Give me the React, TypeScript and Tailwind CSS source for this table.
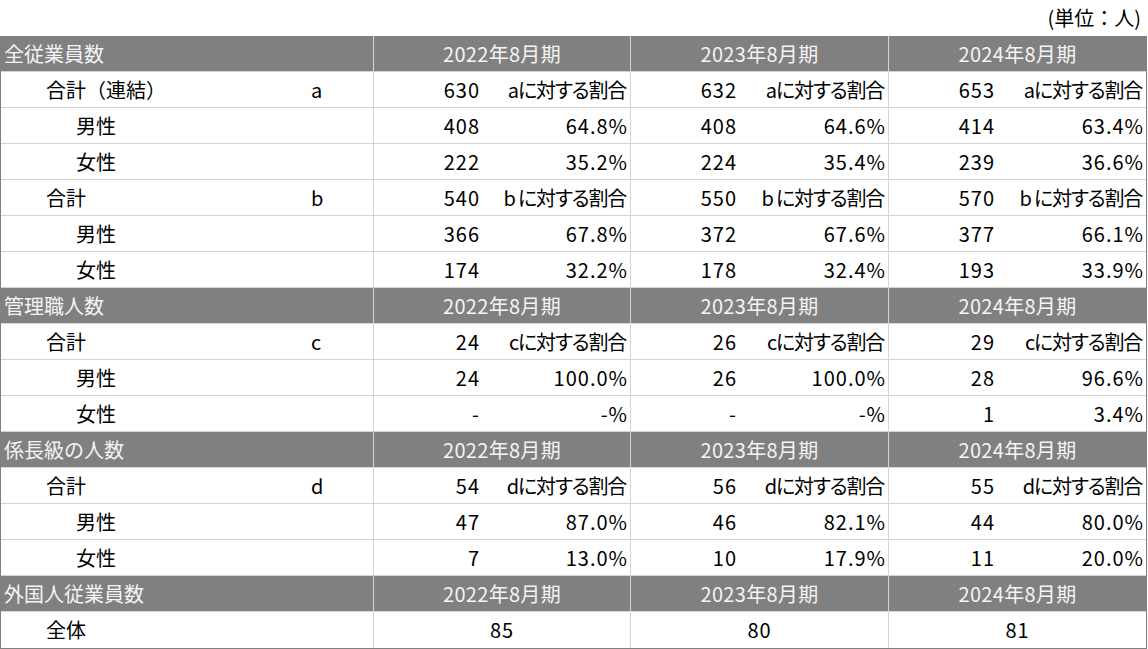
import React from "react";

type Row =
  | { kind: "head"; label: string }
  | { kind: "data"; label: string; indent: 1 | 2; letter?: string; vals: [string, string][] }
  | { kind: "single"; label: string; vals: string[] };

const years = ["2022年8月期", "2023年8月期", "2024年8月期"];

const rows: Row[] = [
  { kind: "head", label: "全従業員数" },
  { kind: "data", label: "合計（連結）", indent: 1, letter: "a", vals: [["630", "aに対する割合"], ["632", "aに対する割合"], ["653", "aに対する割合"]] },
  { kind: "data", label: "男性", indent: 2, vals: [["408", "64.8%"], ["408", "64.6%"], ["414", "63.4%"]] },
  { kind: "data", label: "女性", indent: 2, vals: [["222", "35.2%"], ["224", "35.4%"], ["239", "36.6%"]] },
  { kind: "data", label: "合計", indent: 1, letter: "b", vals: [["540", "b に対する割合"], ["550", "b に対する割合"], ["570", "b に対する割合"]] },
  { kind: "data", label: "男性", indent: 2, vals: [["366", "67.8%"], ["372", "67.6%"], ["377", "66.1%"]] },
  { kind: "data", label: "女性", indent: 2, vals: [["174", "32.2%"], ["178", "32.4%"], ["193", "33.9%"]] },
  { kind: "head", label: "管理職人数" },
  { kind: "data", label: "合計", indent: 1, letter: "c", vals: [["24", "cに対する割合"], ["26", "cに対する割合"], ["29", "cに対する割合"]] },
  { kind: "data", label: "男性", indent: 2, vals: [["24", "100.0%"], ["26", "100.0%"], ["28", "96.6%"]] },
  { kind: "data", label: "女性", indent: 2, vals: [["-", "-%"], ["-", "-%"], ["1", "3.4%"]] },
  { kind: "head", label: "係長級の人数" },
  { kind: "data", label: "合計", indent: 1, letter: "d", vals: [["54", "dに対する割合"], ["56", "dに対する割合"], ["55", "dに対する割合"]] },
  { kind: "data", label: "男性", indent: 2, vals: [["47", "87.0%"], ["46", "82.1%"], ["44", "80.0%"]] },
  { kind: "data", label: "女性", indent: 2, vals: [["7", "13.0%"], ["10", "17.9%"], ["11", "20.0%"]] },
  { kind: "head", label: "外国人従業員数" },
  { kind: "single", label: "全体", vals: ["85", "80", "81"] },
];

const colW = ["w-[257px]", "w-[258px]", "w-[257px]"];

const isRatioText = (s: string) => /[a-d]/.test(s);

export default function App() {
  return (
    <div
      className="w-[1148px] h-[649px] bg-white text-black text-[20px] leading-none"
      style={{ fontFamily: '"Noto Sans CJK JP", "Noto Sans", sans-serif' }}
    >
      <div className="h-[36px] flex items-center justify-end pr-[7px]">(単位：人)</div>
      <div className="w-[1147px] border-l border-r border-b border-[#808080]">
        {rows.map((r, i) => {
          const last = i === rows.length - 1;
          const rb = last ? "" : "border-b border-[#d4d4d4]";
          if (r.kind === "head") {
            return (
              <div key={i} className={`flex h-[36px] bg-[#808080] text-[#f4f4f4] ${rb}`}>
                <div className="w-[373px] border-r border-[#d4d4d4] flex items-center pl-[3px]">{r.label}</div>
                {years.map((y, j) => (
                  <div
                    key={j}
                    className={`${colW[j]} ${j < 2 ? "border-r border-[#d4d4d4]" : ""} flex items-center justify-center tracking-[0.3px]`}
                  >
                    {y}
                  </div>
                ))}
              </div>
            );
          }
          if (r.kind === "single") {
            return (
              <div key={i} className={`flex h-[36px] ${rb}`}>
                <div className="w-[373px] border-r border-[#d4d4d4] flex items-center pl-[45px]">{r.label}</div>
                {r.vals.map((v, j) => (
                  <div
                    key={j}
                    className={`${colW[j]} ${j < 2 ? "border-r border-[#d4d4d4]" : ""} flex items-center justify-center tracking-[1px]`}
                  >
                    {v}
                  </div>
                ))}
              </div>
            );
          }
          return (
            <div key={i} className={`flex h-[36px] ${rb}`}>
              <div className="w-[373px] border-r border-[#d4d4d4] flex items-center">
                <div className={`w-[310px] ${r.indent === 1 ? "pl-[45px]" : "pl-[75px]"}`}>{r.label}</div>
                <div>{r.letter ?? ""}</div>
              </div>
              {r.vals.map(([n, p], j) => (
                <div
                  key={j}
                  className={`${colW[j]} ${j < 2 ? "border-r border-[#d4d4d4]" : ""} flex items-center`}
                >
                  <div className="w-[108px] pr-[2px] text-right tracking-[1px]">{n}</div>
                  {isRatioText(p) ? (
                    <div className="flex-1 pr-[4px] text-right whitespace-nowrap tracking-[-1.2px] [font-feature-settings:'palt']">{p}</div>
                  ) : (
                    <div className="flex-1 pr-[2px] text-right whitespace-nowrap tracking-[1px]">{p}</div>
                  )}
                </div>
              ))}
            </div>
          );
        })}
      </div>
    </div>
  );
}
